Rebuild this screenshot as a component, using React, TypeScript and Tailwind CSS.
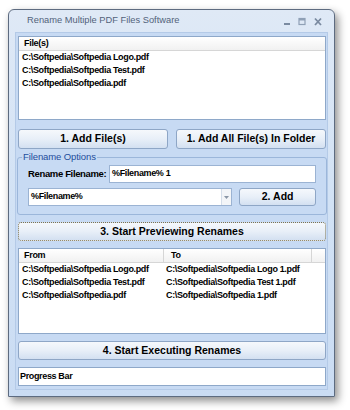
import React from "react";

const F = { fontFamily: '"Liberation Sans", Arial, sans-serif' };

function Btn({ children, className = "" }: { children: React.ReactNode; className?: string }) {
  return (
    <div
      className={
        "flex items-center justify-center rounded-[3px] border bg-gradient-to-b from-[#f5f8fc] via-[#e8eff8] to-[#d3e0f1] text-[10.5px] font-bold text-black " +
        className
      }
    >
      {children}
    </div>
  );
}

const items = [
  ["C:\\Softpedia\\Softpedia Logo.pdf", "C:\\Softpedia\\Softpedia Logo 1.pdf"],
  ["C:\\Softpedia\\Softpedia Test.pdf", "C:\\Softpedia\\Softpedia Test 1.pdf"],
  ["C:\\Softpedia\\Softpedia.pdf", "C:\\Softpedia\\Softpedia 1.pdf"],
];

export default function App() {
  return (
    <div className="w-[350px] h-[410px] bg-white pl-[8px] pt-[9px]" style={F}>
      <div className="w-[327px] h-[388px] rounded-t-[6px] border border-[#5d6b80] bg-gradient-to-b from-[#dfe9f6] via-[#d2e2f5] to-[#cadcf3] shadow-[3px_4px_8px_rgba(0,0,0,0.45)] flex flex-col">
        {/* title bar */}
        <div className="h-[22px] flex items-center pl-[18px] pr-[8px]">
          <span className="text-[9.3px] text-[#52627a] flex-1">Rename Multiple PDF Files Software</span>
          <svg width="44" height="10" viewBox="0 0 44 10" className="mt-[1px]">
            <rect x="2" y="6" width="6" height="2" fill="#7a8aa0" />
            <rect x="17" y="1.5" width="6" height="6" fill="none" stroke="#8fa0b6" strokeWidth="1.2" />
            <rect x="17" y="1.5" width="6" height="2" fill="#8fa0b6" />
            <path d="M33 1.5 L39 8 M39 1.5 L33 8" stroke="#7a8aa0" strokeWidth="1.8" />
          </svg>
        </div>
        {/* client */}
        <div className="ml-[6px] w-[313px] h-[358px] bg-[#c7daf3] border border-[#b4cae7] flex flex-col">
          {/* files list */}
          <div className="ml-[2px] mt-[3px] w-[308px] h-[84px] bg-white border border-[#8ea8c9] flex flex-col">
            <div className="h-[14px] flex items-center pl-[5px] bg-gradient-to-b from-white to-[#f1f1f1] border-b border-[#d6d6d6] text-[9px] font-bold tracking-[-0.3px]">
              File(s)
            </div>
            <div className="pl-[3px] pt-[0px] text-[9px] font-bold tracking-[-0.35px] leading-[13px]">
              {items.map((r) => (
                <div key={r[0]}>{r[0]}</div>
              ))}
            </div>
          </div>
          {/* buttons */}
          <div className="ml-[2px] mt-[9px] w-[308px] flex gap-[8px]">
            <Btn className="h-[20px] flex-1 border-[#8ea6c6]">1. Add File(s)</Btn>
            <Btn className="h-[20px] flex-1 border-[#8ea6c6]">1. Add All File(s) In Folder</Btn>
          </div>
          {/* group box */}
          <div className="relative ml-[1px] mt-[8px] w-[310px] h-[58px] rounded-[3px] border border-[#9bb6da] px-[10px] pt-[7px] flex flex-col gap-[5px]">
            <span className="absolute left-[4px] top-[-7px] px-[1px] bg-[#c7daf3] text-[9.5px] tracking-[-0.1px] text-[#1e4d9c] leading-[12px]">
              Filename Options
            </span>
            <div className="flex items-center h-[18px]">
              <span className="text-[9.5px] font-bold tracking-[-0.35px] w-[81px]">Rename Filename:</span>
              <div className="flex-1 h-[18px] bg-white border border-[#9bb3d3] flex items-center pl-[2px] text-[9px] font-bold tracking-[-0.35px]">
                %Filename% 1
              </div>
            </div>
            <div className="flex items-center h-[18px] gap-[7px]">
              <div className="w-[205px] h-[18px] bg-white border border-[#9bb3d3] flex items-center">
                <span className="flex-1 pl-[2px] text-[9px] font-bold tracking-[-0.35px]">%Filename%</span>
                <div className="w-[10px] h-[16px] border-l border-[#d4dde9] bg-[#f3f5f8] flex items-center justify-center">
                  <svg width="5" height="3" viewBox="0 0 5 3">
                    <path d="M0 0 L5 0 L2.5 3 Z" fill="#8a96a6" />
                  </svg>
                </div>
              </div>
              <Btn className="w-[77px] h-[18px] border-[#8ea6c6]">2. Add</Btn>
            </div>
          </div>
          {/* preview button */}
          <Btn className="ml-[2px] mt-[7px] w-[308px] h-[19px] border-dotted border-[#7d7450]">
            3. Start Previewing Renames
          </Btn>
          {/* list view */}
          <div className="ml-[2px] mt-[7px] w-[308px] h-[86px] bg-white border border-[#8ea8c9] flex flex-col">
            <div className="h-[14px] flex bg-gradient-to-b from-white to-[#f1f1f1] border-b border-[#d6d6d6] text-[9px] font-bold tracking-[-0.3px]">
              <div className="w-[145px] border-r border-[#d6d6d6] pl-[5px] flex items-center">From</div>
              <div className="w-[148px] border-r border-[#d6d6d6] pl-[7px] flex items-center">To</div>
              <div className="flex-1" />
            </div>
            <div className="pt-[0px] text-[9px] font-bold tracking-[-0.35px] leading-[13px]">
              {items.map((r) => (
                <div key={r[0]} className="flex">
                  <div className="w-[146px] pl-[3px]">{r[0]}</div>
                  <div className="pl-[1px]">{r[1]}</div>
                </div>
              ))}
            </div>
          </div>
          {/* execute button */}
          <Btn className="ml-[2px] mt-[7px] w-[308px] h-[19px] border-[#8ea6c6]">4. Start Executing Renames</Btn>
          {/* progress */}
          <div className="ml-[2px] mt-[7px] w-[308px] h-[19px] bg-white border border-[#8ea8c9] flex items-center pl-[1px] text-[9px] font-bold tracking-[-0.35px]">
            Progress Bar
          </div>
        </div>
      </div>
    </div>
  );
}
